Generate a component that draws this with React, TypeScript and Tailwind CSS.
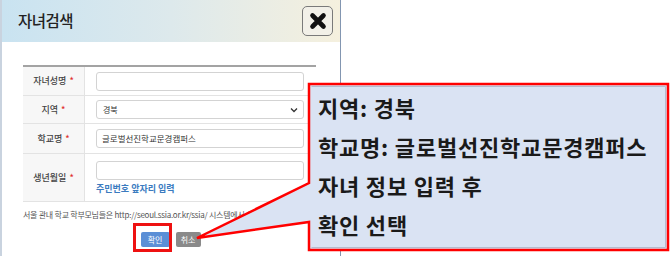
import React from 'react';

const KR = { fontFamily: '"Noto Sans CJK KR", "Noto Sans", sans-serif' };

function Row({ label, h, children }: { label: string; h: string; children: React.ReactNode }) {
  return (
    <div className={`flex border-b border-[#e3e3e3] ${h}`}>
      <div className="w-[62px] shrink-0 bg-[#f7f7f7] border-r border-[#e3e3e3] flex items-center justify-center text-[9px] font-medium text-[#444]">
        {label}
        <span className="text-[#e0322f] ml-[3px]">*</span>
      </div>
      <div className="flex-1 pl-[11px] pr-[12px] flex flex-col justify-center">{children}</div>
    </div>
  );
}

export default function App() {
  return (
    <div className="relative w-[670px] h-[256px] overflow-hidden bg-white" style={KR}>
      <div className="w-[341px] h-[256px] border-r border-[#8396b1] border-l-2 border-l-[#c9d3df] bg-white flex flex-col">
        <div className="h-[42px] shrink-0 flex items-center justify-between pl-[16px] pr-[7px] bg-gradient-to-r from-[#c9e3f1] via-[#dde9ec] to-[#f5f0de]">
          <span className="text-[15.5px] text-[#222] font-medium tracking-[-0.5px]">자녀검색</span>
          <div className="w-[31px] h-[30px] rounded-[5px] border-[1.5px] border-[#7a7a7a] bg-[#f2f0e8] flex items-center justify-center">
            <svg width="18" height="18" viewBox="0 0 18 18">
              <path d="M3.5 3.5 L14.5 14.5 M14.5 3.5 L3.5 14.5" stroke="#111" strokeWidth="4.6" strokeLinecap="round" />
            </svg>
          </div>
        </div>
        <div className="pt-[23px] pl-[21px] pr-[24px]">
          <div className="border-t-2 border-[#a3a3a3]">
            <Row label="자녀성명" h="h-[29px]">
              <div className="h-[19px] border border-[#d3d3d3] rounded-[3px]" />
            </Row>
            <Row label="지역" h="h-[28px]">
              <div className="h-[19px] border border-[#d3d3d3] rounded-[3px] flex items-center justify-between pl-[6px] pr-[5px] text-[8px] text-[#333]">
                <span>경북</span>
                <svg width="8" height="6" viewBox="0 0 8 6">
                  <path d="M1 1.5 L4 4.5 L7 1.5" stroke="#333" strokeWidth="1.3" fill="none" />
                </svg>
              </div>
            </Row>
            <Row label="학교명" h="h-[30px]">
              <div className="h-[19px] border border-[#d3d3d3] rounded-[3px] flex items-center pl-[5px] text-[8.5px] text-[#333]">
                글로벌선진학교문경캠퍼스
              </div>
            </Row>
            <Row label="생년월일" h="h-[48px]">
              <div className="h-[19px] border border-[#d3d3d3] rounded-[3px]" />
              <div className="mt-[3px] text-[9px] font-bold text-[#3b7bbf] leading-[12px]">주민번호 앞자리 입력</div>
            </Row>
          </div>
          <div className="mt-[7px] text-[8px] tracking-[-0.25px] text-[#555] leading-[12px] whitespace-nowrap">
            서울 관내 학교 학부모님들은 http://seoul.ssia.or.kr/ssia/ 시스템에서 신청하시기 바랍니다.
          </div>
          <div className="mt-[11px] flex justify-center gap-[6px] pl-[2px]">
            <div className="w-[29px] h-[15px] rounded-[2px] bg-[#5b8fd6] text-white text-[8px] flex items-center justify-center">확인</div>
            <div className="w-[25px] h-[15px] rounded-[2px] bg-[#8a8a8a] text-white text-[8px] flex items-center justify-center">취소</div>
          </div>
        </div>
      </div>

      {/* red highlight on 확인 */}
      <div className="absolute left-[133px] top-[223px] w-[39px] h-[29px] border-[3px] border-[#ee1111]" />

      {/* callout */}
      <svg className="absolute left-0 top-0" width="670" height="256">
        <path
          d="M309 84 L668 84 L668 250 L309 250 L309 222 L197 238 L309 183 Z"
          fill="#dae3f3"
          stroke="#ff0000"
          strokeWidth="2.5"
          strokeLinejoin="miter"
        />
        <path d="M311.5 86.5 L665.5 86.5 L665.5 247.5 L311.5 247.5" fill="none" stroke="#a9b3c4" strokeWidth="0.8" />
      </svg>
      <div className="absolute left-[318px] top-[88px] text-[22px] tracking-[0.8px] font-bold text-[#1a1a1a] leading-[39px]">
        <div>지역: 경북</div>
        <div>학교명: 글로벌선진학교문경캠퍼스</div>
        <div>자녀 정보 입력 후</div>
        <div>확인 선택</div>
      </div>
    </div>
  );
}
